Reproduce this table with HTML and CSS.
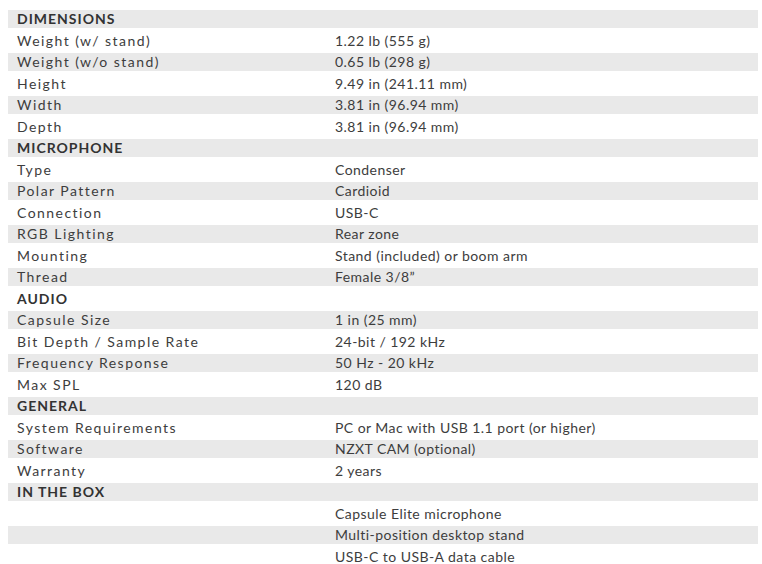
FILE: index.html
```html
<!DOCTYPE html>
<html>
<head>
<meta charset="utf-8">
<link rel="stylesheet" href="styles.css">
</head>
<body>
<div class="specs">
  <div class="row head"><div class="k">DIMENSIONS</div><div class="v"></div></div>
  <div class="row"><div class="k">Weight (w/ stand)</div><div class="v">1.22 lb (555 g)</div></div>
  <div class="row"><div class="k">Weight (w/o stand)</div><div class="v">0.65 lb (298 g)</div></div>
  <div class="row"><div class="k">Height</div><div class="v">9.49 in (241.11 mm)</div></div>
  <div class="row"><div class="k">Width</div><div class="v">3.81 in (96.94 mm)</div></div>
  <div class="row"><div class="k">Depth</div><div class="v">3.81 in (96.94 mm)</div></div>
  <div class="row head"><div class="k">MICROPHONE</div><div class="v"></div></div>
  <div class="row"><div class="k">Type</div><div class="v">Condenser</div></div>
  <div class="row"><div class="k">Polar Pattern</div><div class="v">Cardioid</div></div>
  <div class="row"><div class="k">Connection</div><div class="v">USB-C</div></div>
  <div class="row"><div class="k">RGB Lighting</div><div class="v">Rear zone</div></div>
  <div class="row"><div class="k">Mounting</div><div class="v">Stand (included) or boom arm</div></div>
  <div class="row"><div class="k">Thread</div><div class="v">Female 3/8”</div></div>
  <div class="row head"><div class="k">AUDIO</div><div class="v"></div></div>
  <div class="row"><div class="k">Capsule Size</div><div class="v">1 in (25 mm)</div></div>
  <div class="row"><div class="k">Bit Depth / Sample Rate</div><div class="v">24-bit / 192 kHz</div></div>
  <div class="row"><div class="k">Frequency Response</div><div class="v">50 Hz - 20 kHz</div></div>
  <div class="row"><div class="k">Max SPL</div><div class="v">120 dB</div></div>
  <div class="row head"><div class="k">GENERAL</div><div class="v"></div></div>
  <div class="row"><div class="k">System Requirements</div><div class="v">PC or Mac with USB 1.1 port (or higher)</div></div>
  <div class="row"><div class="k">Software</div><div class="v">NZXT CAM (optional)</div></div>
  <div class="row"><div class="k">Warranty</div><div class="v">2 years</div></div>
  <div class="row head"><div class="k">IN THE BOX</div><div class="v"></div></div>
  <div class="row"><div class="k"></div><div class="v">Capsule Elite microphone</div></div>
  <div class="row"><div class="k"></div><div class="v">Multi-position desktop stand</div></div>
  <div class="row"><div class="k"></div><div class="v">USB-C to USB-A data cable</div></div>
</div>
</body>
</html>
```
FILE: styles.css
```css
html, body {
  margin: 0;
  padding: 0;
  background: #ffffff;
}
body {
  padding: 10px 0 0 8px;
  font-family: Lato, "Noto Sans", sans-serif;
  color: #3d3d3d;
  font-size: 14px;
}
.specs {
  width: 750px;
  display: flex;
  flex-direction: column;
  gap: 3.5px;
}
.row {
  display: grid;
  grid-template-columns: 318px 1fr;
  height: 18px;
  line-height: 18px;
}
.row:nth-child(odd) {
  background: #e9e9e9;
}
.k {
  padding-left: 9px;
  letter-spacing: 1.45px;
  white-space: nowrap;
}
.v {
  padding-left: 9px;
  letter-spacing: 0.45px;
  white-space: nowrap;
}
.head .k {
  font-weight: 700;
  letter-spacing: 1px;
  color: #333333;
}
```
